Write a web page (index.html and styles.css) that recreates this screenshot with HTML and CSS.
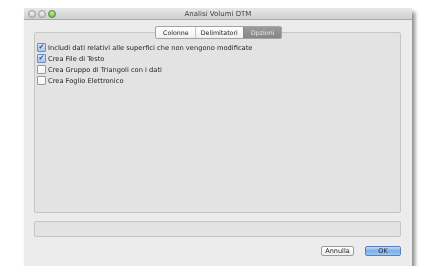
FILE: index.html
```html
<!DOCTYPE html>
<html>
	<head>
		<meta charset="utf-8">
		<title>Analisi Volumi DTM</title>
		<link rel="stylesheet" href="styles.css">
	</head>
	<body>
		<div class="finestra">
			<div class="barra-titolo">
				<span class="semafori">
					<span class="luce"></span>
					<span class="luce"></span>
					<span class="luce verde"></span>
				</span>
				<span class="titolo">Analisi Volumi DTM</span>
			</div>
			<div class="contenuto">
				<div class="gruppo">
					<div class="schede">
						<span class="scheda">Colonne</span>
						<span class="scheda">Delimitatori</span>
						<span class="scheda attiva">Opzioni</span>
					</div>
					<label class="opzione"><span class="casella spuntata">&#10004;</span>Includi dati relativi alle superfici che non vengono modificate</label>
					<label class="opzione"><span class="casella spuntata">&#10004;</span>Crea File di Testo</label>
					<label class="opzione"><span class="casella"></span>Crea Gruppo di Triangoli con i dati</label>
					<label class="opzione"><span class="casella"></span>Crea Foglio Elettronico</label>
				</div>
				<div class="avanzamento"></div>
				<div class="pulsanti">
					<button class="pulsante">Annulla</button>
					<button class="pulsante predefinito">OK</button>
				</div>
			</div>
		</div>
	</body>
</html>
```

FILE: styles.css
```css
body {
	margin: 0;
	background: #fff;
	font-family: "DejaVu Sans", sans-serif;
}

.finestra {
	margin: 8px 0 0 24px;
	width: 388px;
	height: 258px;
	background: #ececec;
	box-shadow: 3px 4px 4px rgba(0, 0, 0, 0.45);
	display: flex;
	flex-direction: column;
	will-change: transform;
}

.barra-titolo {
	height: 11px;
	background: linear-gradient(#e8e8e8, #cfcfcf);
	border-bottom: 1px solid #a9a9a9;
	position: relative;
	display: flex;
	align-items: center;
	justify-content: center;
}

.semafori {
	position: absolute;
	left: 4px;
	top: 2px;
	display: flex;
	gap: 2px;
}

.luce {
	width: 6px;
	height: 6px;
	border-radius: 50%;
	background: radial-gradient(circle at 50% 35%, #f2f2f2, #bdbdbd);
	border: 0.5px solid #9c9c9c;
}

.luce.verde {
	background: radial-gradient(circle at 50% 35%, #c8f0a0, #5aa82c);
	border-color: #5b8c3a;
}

.titolo {
	font-size: 7px;
	color: #404040;
}

.contenuto {
	flex: 1;
	padding: 12px 11px 0 10px;
	display: flex;
	flex-direction: column;
}

.gruppo {
	position: relative;
	height: 170px;
	background: #e3e3e3;
	border: 1px solid #c6c6c6;
	border-radius: 2px;
	padding: 9px 0 0 2px;
}

.schede {
	position: absolute;
	top: -7px;
	left: 120px;
	display: flex;
	height: 11px;
	border: 1px solid #a4a4a4;
	border-radius: 2px;
	background: linear-gradient(#ffffff, #f0f0f0);
}

.scheda {
	font-size: 6.3px;
	color: #222;
	padding: 0 5px;
	line-height: 11px;
	border-left: 1px solid #c4c4c4;
}

.scheda:first-child {
	border-left: none;
	padding: 0 6px 0 7px;
}

.scheda.attiva {
	background: linear-gradient(#9a9a9a, #868686);
	color: #e6e6e6;
	padding: 0 7px;
	border-left-color: #888;
}

.opzione {
	display: flex;
	align-items: center;
	height: 11px;
	font-size: 6.7px;
	color: #1e1e1e;
}

.casella {
	width: 7px;
	height: 7px;
	margin-right: 2px;
	border: 1px solid #9a9a9a;
	border-radius: 1px;
	background: linear-gradient(#ffffff, #f2f2f2);
	font-size: 7px;
	line-height: 7px;
	color: #274e92;
	display: flex;
	justify-content: center;
	overflow: visible;
}

.casella.spuntata {
	background: linear-gradient(#d8e6f6, #a9c7ea);
	border-color: #6f8db5;
}

.avanzamento {
	margin-top: 8px;
	height: 14px;
	background: #e3e3e3;
	border: 1px solid #c6c6c6;
	border-radius: 2px;
}

.pulsanti {
	margin-top: 9px;
	display: flex;
	justify-content: flex-end;
	gap: 11px;
}

.pulsante {
	font-family: "DejaVu Sans", sans-serif;
	font-size: 6.5px;
	color: #222;
	height: 10px;
	padding: 0;
	width: 33px;
	border: 1px solid #9c9c9c;
	border-radius: 2px;
	background: linear-gradient(#ffffff, #ececec);
	line-height: 8px;
}

.pulsante.predefinito {
	width: 36px;
	border-color: #5a7fbb;
	background: linear-gradient(#c4dbf6, #7cadea 50%, #9fc6f3);
}
```
